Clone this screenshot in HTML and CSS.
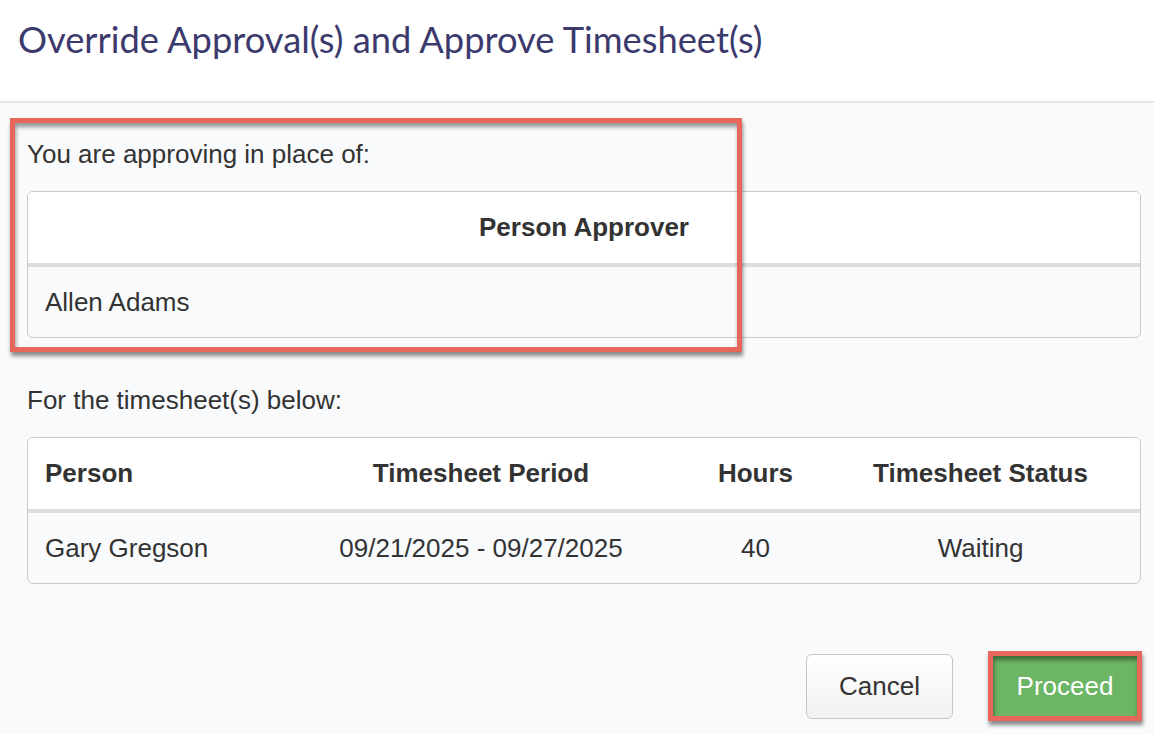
FILE: index.html
```html
<!DOCTYPE html>
<html lang="en">
<head>
<meta charset="utf-8">
<title>Override Approval(s) and Approve Timesheet(s)</title>
<link rel="stylesheet" href="styles.css">
</head>
<body>
<header class="modal-header">
  <h1 class="modal-title">Override Approval(s) and Approve Timesheet(s)</h1>
</header>
<main class="modal-body">
  <div class="annot annot-box"></div>
  <p class="label">You are approving in place of:</p>
  <div class="table-wrap">
    <table class="grid">
      <thead>
        <tr><th class="center">Person Approver</th></tr>
      </thead>
      <tbody>
        <tr><td>Allen Adams</td></tr>
      </tbody>
    </table>
  </div>
  <p class="label label-gap">For the timesheet(s) below:</p>
  <div class="table-wrap">
    <table class="grid fixed">
      <colgroup>
        <col class="c-person">
        <col class="c-period">
        <col class="c-hours">
        <col class="c-status">
      </colgroup>
      <thead>
        <tr>
          <th>Person</th>
          <th class="center">Timesheet Period</th>
          <th class="center">Hours</th>
          <th class="center">Timesheet Status</th>
        </tr>
      </thead>
      <tbody>
        <tr>
          <td>Gary Gregson</td>
          <td class="center">09/21/2025 - 09/27/2025</td>
          <td class="center">40</td>
          <td class="center">Waiting</td>
        </tr>
      </tbody>
    </table>
  </div>
  <div class="actions">
    <button class="btn btn-cancel" type="button">Cancel</button>
    <button class="btn btn-proceed" type="button">Proceed</button>
  </div>
</main>
</body>
</html>
```
FILE: styles.css
```css
html, body {
  margin: 0;
  padding: 0;
}
body {
  width: 1154px;
  height: 734px;
  overflow: hidden;
  background: #f9fafc;
  font-family: "Liberation Sans", Arial, Helvetica, sans-serif;
  font-size: 26px;
  color: #333333;
}
.modal-header {
  background: #ffffff;
  padding: 19px 0 42px 18px;
  border-bottom: 2px solid #e6e6e8;
}
.modal-title {
  margin: 0;
  font-family: Lato, "Open Sans", sans-serif;
  font-weight: 400;
  font-size: 36.3px;
  line-height: 40px;
  color: #3c3a6d;
  white-space: nowrap;
}
.modal-body {
  position: relative;
  padding: 33px 13px 0 27px;
}
.label {
  margin: 0;
  line-height: 36px;
}
.label-gap {
  margin-top: 44px;
}
.table-wrap {
  margin-top: 19px;
  border: 1px solid #c9c9cb;
  border-radius: 6px;
  overflow: hidden;
  background: #f9fafc;
}
.grid {
  width: 100%;
  border-collapse: separate;
  border-spacing: 0;
}
.grid.fixed {
  table-layout: fixed;
}
.c-person { width: 244px; }
.c-period { width: 418px; }
.c-hours { width: 131px; }
.c-status { width: 319px; }
.grid th {
  background: #ffffff;
  font-weight: 700;
  text-align: left;
  padding: 17px 17px 17px;
  line-height: 37px;
  border-bottom: 4px solid #dcdcdc;
  white-space: nowrap;
}
.grid td {
  text-align: left;
  padding: 17px 17px;
  line-height: 36px;
  white-space: nowrap;
}
.grid .center {
  text-align: center;
}
.actions {
  margin-top: 67px;
  display: flex;
  justify-content: flex-end;
  align-items: center;
  gap: 35px;
}
.btn {
  font-family: "Liberation Sans", Arial, Helvetica, sans-serif;
  font-size: 26px;
  line-height: 30px;
  cursor: pointer;
}
.btn-cancel {
  width: 147px;
  height: 65px;
  border: 1px solid #c6c6c8;
  border-radius: 6px;
  background: linear-gradient(#ffffff, #f1f1f1);
  color: #333333;
}
.btn-proceed {
  width: 154px;
  height: 70px;
  margin-right: -1px;
  border: 5px solid #e8675a;
  border-radius: 0;
  background: #6cb564;
  color: #ffffff;
  box-shadow: 1px 4px 4px rgba(0, 0, 0, 0.45), inset 1px 4px 4px rgba(0, 0, 0, 0.4);
}
.annot-box {
  position: absolute;
  left: 10px;
  top: 15px;
  width: 722px;
  height: 224px;
  border: 5px solid #e8675a;
  box-shadow: 1px 4px 4px rgba(0, 0, 0, 0.45), inset 1px 4px 4px rgba(0, 0, 0, 0.4);
  pointer-events: none;
  z-index: 2;
}
```
